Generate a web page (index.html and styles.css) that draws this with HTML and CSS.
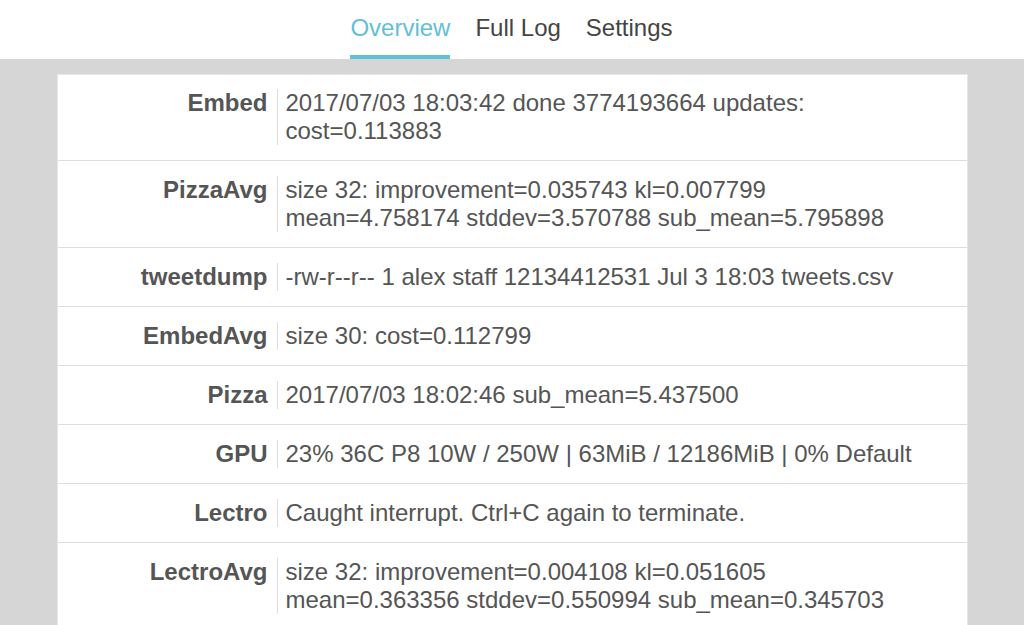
FILE: index.html
```html
<!DOCTYPE html>
<html lang="en">
<head>
<meta charset="utf-8">
<title>Overview</title>
<link rel="stylesheet" href="styles.css">
</head>
<body>
<header class="topbar">
  <nav class="tabs">
    <a class="tab active" href="#">Overview</a>
    <a class="tab" href="#">Full Log</a>
    <a class="tab" href="#">Settings</a>
  </nav>
</header>
<main class="content">
  <section class="card">
    <div class="row"><div class="label">Embed</div><div class="value">2017/07/03 18:03:42 done 3774193664 updates:<br>cost=0.113883</div></div>
    <div class="row"><div class="label">PizzaAvg</div><div class="value">size 32: improvement=0.035743 kl=0.007799<br>mean=4.758174 stddev=3.570788 sub_mean=5.795898</div></div>
    <div class="row"><div class="label">tweetdump</div><div class="value">-rw-r--r-- 1 alex staff 12134412531 Jul 3 18:03 tweets.csv</div></div>
    <div class="row"><div class="label">EmbedAvg</div><div class="value">size 30: cost=0.112799</div></div>
    <div class="row"><div class="label">Pizza</div><div class="value">2017/07/03 18:02:46 sub_mean=5.437500</div></div>
    <div class="row"><div class="label">GPU</div><div class="value">23% 36C P8 10W / 250W | 63MiB / 12186MiB | 0% Default</div></div>
    <div class="row"><div class="label">Lectro</div><div class="value">Caught interrupt. Ctrl+C again to terminate.</div></div>
    <div class="row"><div class="label">LectroAvg</div><div class="value">size 32: improvement=0.004108 kl=0.051605<br>mean=0.363356 stddev=0.550994 sub_mean=0.345703</div></div>
  </section>
</main>
</body>
</html>
```

FILE: styles.css
```css
html, body {
  margin: 0;
  padding: 0;
}
body {
  font-family: "Liberation Sans", Arial, sans-serif;
  font-size: 24px;
  color: #555;
  background: #d6d6d6;
}
.topbar {
  background: #fff;
  display: flex;
  justify-content: center;
}
.tabs {
  display: flex;
  gap: 25px;
  margin-left: -1px;
}
.tab {
  display: block;
  padding: 14px 0 13px;
  line-height: 28px;
  border-bottom: 4px solid transparent;
  color: #444;
  text-decoration: none;
}
.tab.active {
  color: #63bed8;
  border-bottom-color: #63bed8;
}
.content {
  padding-top: 15px;
  display: flex;
  justify-content: center;
}
.card {
  width: 909px;
  background: #fff;
  border: 1px solid #e6e6e6;
  border-bottom: none;
}
.row {
  display: grid;
  grid-template-columns: 219px 1fr;
  padding: 15px 0;
  border-bottom: 1px solid #dedede;
  line-height: 28px;
}
.row:first-child {
  padding-top: 14px;
}
.label {
  text-align: right;
  font-weight: bold;
  padding-right: 9px;
}
.value {
  border-left: 1px solid #dedede;
  padding-left: 8px;
}
```
